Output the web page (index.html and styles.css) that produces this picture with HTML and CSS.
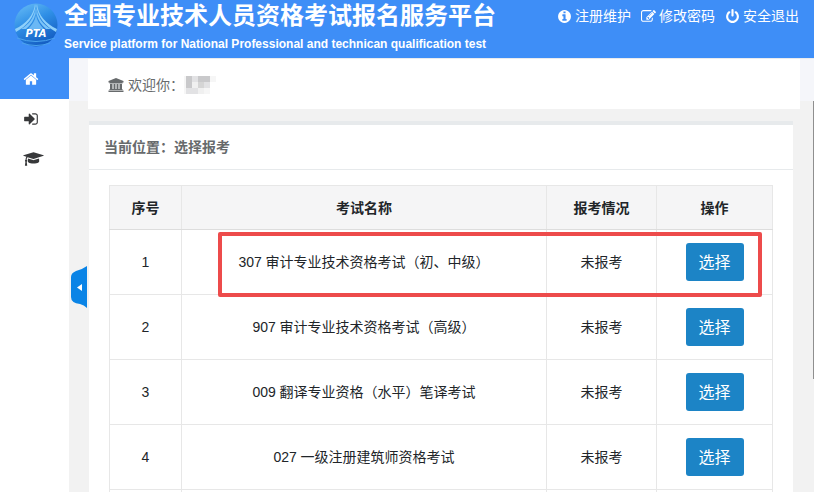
FILE: index.html
```html
<!DOCTYPE html>
<html lang="zh-CN">

<head>
    <meta charset="UTF-8">
    <meta name="viewport" content="width=device-width, initial-scale=1.0">
    <title>全国专业技术人员资格考试报名服务平台</title>
    <link rel="stylesheet" href="styles.css">
</head>

<body>

    <header class="header">
        <svg class="logo" viewBox="0 0 44 44" aria-hidden="true">
            <defs>
                <linearGradient id="logo-bg" x1="0" y1="0" x2="0.5" y2="1">
                    <stop offset="0" stop-color="#6cc0f7" />
                    <stop offset="0.5" stop-color="#2f8fe6" />
                    <stop offset="1" stop-color="#1560c4" />
                </linearGradient>
            </defs>
            <circle cx="22" cy="22" r="21.5" fill="url(#logo-bg)" />
            <path d="M21 1C20 12 12 21 1 26L2 29C13 23 20 14 21.500 3ZM23 1C24 12 32 21 43 26L42 29C31 23 24 14 22.500 3Z" fill="#8fd0fa" />
            <path d="M21.500 5C20 16 14 22 7 26H12C17 22 20 17 21.500 11ZM22.500 5C24 16 30 22 37 26H32C27 22 24 17 22.500 11Z" fill="#7cc4f8" />
            <path d="M22 12C21 18 18 22 14 26H30C26 22 23 18 22 12Z" fill="#6ab8f5" />
            <path d="M3 35Q22 42 41 35" fill="none" stroke="#4ba3ee" stroke-width="1" />
            <path d="M8 40Q22 45 36 40" fill="none" stroke="#4ba3ee" stroke-width="1" />
            <text x="22" y="34" text-anchor="middle" class="logo-text">PTA</text>
        </svg>
        <div class="brand">
            <h1>全国专业技术人员资格考试报名服务平台</h1>
            <p>Service platform for National Professional and technican qualification test</p>
        </div>
        <nav class="user-links">
            <a href="#">
                <svg class="icon" viewBox="0 0 1792 1792"><path d="M1152 1376v-160q0-14-9-23t-23-9h-96v-512q0-14-9-23t-23-9h-320q-14 0-23 9t-9 23v160q0 14 9 23t23 9h96v320h-96q-14 0-23 9t-9 23v160q0 14 9 23t23 9h448q14 0 23-9t9-23zm-128-896v-160q0-14-9-23t-23-9h-192q-14 0-23 9t-9 23v160q0 14 9 23t23 9h192q14 0 23-9t9-23zm640 416q0 209-103 385.5t-279.5 279.5-385.5 103-385.5-103-279.5-279.5-103-385.5 103-385.5 279.5-279.5 385.5-103 385.5 103 279.5 279.5 103 385.5z" /></svg>
                注册维护
            </a>
            <a href="#">
                <svg class="icon" viewBox="0 0 1792 1792"><path d="M888 1184l116-116-152-152-116 116v56h96v96h56zm440-720q-16-16-33 1l-350 350q-17 17-1 33t33-1l350-350q17-17 1-33zm80 594v190q0 119-84.5 203.5t-203.5 84.5h-832q-119 0-203.5-84.5t-84.5-203.5v-832q0-119 84.5-203.5t203.5-84.5h832q63 0 117 25 15 7 18 23 3 17-9 29l-49 49q-14 14-32 8-23-6-45-6h-832q-66 0-113 47t-47 113v832q0 66 47 113t113 47h832q66 0 113-47t47-113v-126q0-13 9-22l64-64q15-15 35-7t20 29zm-96-738l288 288-672 672h-288v-288zm444 132l-92 92-288-288 92-92q28-28 68-28t68 28l152 152q28 28 28 68t-28 68z" /></svg>
                修改密码
            </a>
            <a href="#">
                <svg class="icon" viewBox="0 0 1792 1792"><path d="M1664 896q0 156-61 298t-164 245-245 164-298 61-298-61-245-164-164-245-61-298q0-182 80.5-343t226.5-270q43-32 95.5-25t83.5 50q32 42 24.5 94.5t-49.5 84.5q-98 74-151.5 181t-53.5 228q0 104 40.5 198.5t109.5 163.5 163.5 109.5 198.5 40.5 198.5-40.5 163.5-109.5 109.5-163.5 40.5-198.5q0-121-53.5-228t-151.5-181q-42-32-49.5-84.5t24.5-94.5q31-43 84-50t95 25q146 109 226.5 270t80.5 343zm-640-768v640q0 52-38 90t-90 38-90-38-38-90v-640q0-52 38-90t90-38 90 38 38 90z" /></svg>
                安全退出
            </a>
        </nav>
    </header>

    <div class="layout">
        <nav class="sidebar">
            <a href="#" class="active" aria-label="首页">
                <svg class="icon" viewBox="0 0 1792 1792"><path d="M1472 992v480q0 26-19 45t-45 19h-384v-384h-256v384h-384q-26 0-45-19t-19-45v-480q0-1 .5-3t.5-3l575-474 575 474q1 2 1 6zm223-69l-62 74q-8 9-21 11h-3q-13 0-21-7l-692-577-692 577q-12 8-24 7-13-2-21-11l-62-74q-8-10-7-23.5t11-21.5l719-599q32-26 76-26t76 26l244 204v-195q0-14 9-23t23-9h192q14 0 23 9t9 23v408l219 182q10 8 11 21.5t-7 23.5z" /></svg>
            </a>
            <a href="#" aria-label="报考">
                <svg class="icon" viewBox="0 0 1792 1792"><path d="M1312 896q0 26-19 45l-544 544q-19 19-45 19t-45-19-19-45v-288h-448q-26 0-45-19t-19-45v-384q0-26 19-45t45-19h448v-288q0-26 19-45t45-19 45 19l544 544q19 19 19 45zm352-352v704q0 119-84.5 203.5t-203.5 84.5h-320q-13 0-22.5-9.5t-9.5-22.5q0-4-1-20t-.5-26.5 3-23.5 10-19.5 20.5-6.5h320q66 0 113-47t47-113v-704q0-66-47-113t-113-47h-312l-11.5-1-11.5-3-8-5.5-7-9-2-13.5q0-4-1-20t-.5-26.5 3-23.5 10-19.5 20.5-6.5h320q119 0 203.5 84.5t84.5 203.5z" /></svg>
            </a>
            <a href="#" aria-label="证书">
                <svg class="icon icon-wide" viewBox="0 0 2304 1792"><path d="M1774 836l18 316q4 69-82 128t-235 93.5-323 34.5-323-34.5-235-93.5-82-128l18-316 574 181q22 7 48 7t48-7zm530-324q0 23-22 31l-1120 352q-4 1-10 1t-10-1l-652-206q-43 34-71 111.5t-34 178.5q63 36 63 109 0 69-58 107l58 433q2 14-8 25-9 11-24 11h-192q-15 0-24-11-10-11-8-25l58-433q-58-38-58-107 0-73 65-111 11-207 98-330l-333-104q-22-8-22-31t22-31l1120-352q4-1 10-1t10 1l1120 352q22 8 22 31z" /></svg>
            </a>
        </nav>

        <main class="main">
            <div class="welcome">
                <svg class="icon" viewBox="0 0 16 16"><path d="M8 1L15.500 4V5.500H14.500V6.500H1.500V5.500H.500V4ZM2 7H4.500V12H5.500V7H7.500V12H8.500V7H10.500V12H11.500V7H14V12H14.500V13H1.500V12H2ZM.500 13.500H15.500V15H.500Z" /></svg>
                <span>欢迎你：</span>
                <!-- user name is masked -->
                <svg class="masked-name" viewBox="4 0 32 18" shape-rendering="crispEdges">
                    <path fill="#f6f6f6" d="M0 12h6v6H0zM30 0h6v6h-6zM24 12h6v6h-6zM3 0h3v12H3z" />
                    <path fill="#c9c9cb" d="M6 0h6v12H6zM18 0h12v6H18z" />
                    <path fill="#e2e2e4" d="M12 0h6v6h-6zM6 12h12v6H6zM24 6h6v6h-6z" />
                    <path fill="#d5d5d5" d="M18 6h6v6h-6z" />
                    <path fill="#f0f0f0" d="M12 6h6v6h-6zM18 12h6v6h-6z" />
                </svg>
            </div>

            <section class="card">
                <h2 class="card-title">当前位置：选择报考</h2>
                <div class="card-body">
                    <div class="table-wrap">
                        <table class="exam-table">
                            <thead>
                                <tr>
                                    <th class="col-no">序号</th>
                                    <th>考试名称</th>
                                    <th class="col-status">报考情况</th>
                                    <th class="col-action">操作</th>
                                </tr>
                            </thead>
                            <tbody>
                                <tr>
                                    <td>1</td>
                                    <td>307 审计专业技术资格考试（初、中级）</td>
                                    <td>未报考</td>
                                    <td><button type="button" class="btn">选择</button></td>
                                </tr>
                                <tr>
                                    <td>2</td>
                                    <td>907 审计专业技术资格考试（高级）</td>
                                    <td>未报考</td>
                                    <td><button type="button" class="btn">选择</button></td>
                                </tr>
                                <tr>
                                    <td>3</td>
                                    <td>009 翻译专业资格（水平）笔译考试</td>
                                    <td>未报考</td>
                                    <td><button type="button" class="btn">选择</button></td>
                                </tr>
                                <tr>
                                    <td>4</td>
                                    <td>027 一级注册建筑师资格考试</td>
                                    <td>未报考</td>
                                    <td><button type="button" class="btn">选择</button></td>
                                </tr>
                                <tr>
                                    <td></td>
                                    <td></td>
                                    <td></td>
                                    <td></td>
                                </tr>
                            </tbody>
                        </table>
                        <div class="highlight"></div>
                    </div>
                </div>
            </section>

            <button type="button" class="collapse" aria-label="收起菜单">
                <svg viewBox="0 0 16 42"><path class="collapse-bg" d="M16 0V42Q13 39 9 38Q0 37 0 31V11Q0 7 5 5Q12 3 16 0Z" /><path class="collapse-arrow" d="M6 21.500L11 18V25Z" /></svg>
            </button>
            <div class="scroll-thumb"></div>
        </main>
    </div>

</body>

</html>
```

FILE: styles.css
```css
* {
    box-sizing: border-box;
}

body {
    margin: 0;
    height: 100vh;
    display: flex;
    flex-direction: column;
    overflow: hidden;
    font-family: "Liberation Sans", "Noto Sans CJK SC", sans-serif;
    font-size: 14px;
    line-height: 20px;
    color: #212529;
}

a {
    color: inherit;
    text-decoration: none;
}

.icon {
    width: 16px;
    height: 16px;
    fill: currentColor;
    flex: none;
}

/* Header */
.header {
    display: flex;
    align-items: flex-start;
    height: 58px;
    flex: none;
    padding: 0 15px 0 14px;
    background-color: #3e8ef7;
    color: #fff;
}

.logo {
    width: 44px;
    height: 44px;
    margin-top: 3px;
}

.logo-text {
    font-size: 10px;
    font-weight: bold;
    font-style: italic;
    font-family: "DejaVu Sans", sans-serif;
    fill: #fff;
}

.brand {
    margin-left: 6px;
}

.brand h1 {
    margin: 0;
    font-size: 24px;
    line-height: 32px;
    white-space: nowrap;
}

.brand p {
    margin: 0;
    font-size: 12px;
    font-weight: bold;
    line-height: 24px;
    white-space: nowrap;
}

.user-links {
    display: flex;
    gap: 10px;
    margin-left: auto;
    padding-top: 6px;
}

.user-links a {
    display: flex;
    align-items: center;
    gap: 3px;
    white-space: nowrap;
}

.user-links .icon {
    width: 15px;
    height: 15px;
}

/* Sidebar */
.layout {
    display: flex;
    flex: 1;
    min-height: 0;
}

.sidebar {
    width: 69px;
    flex: none;
    background-color: #fff;
    color: #37383a;
}

.sidebar a {
    display: flex;
    align-items: center;
    height: 40px;
    padding-left: 23px;
}

.sidebar .active {
    height: 41px;
    background-color: #3e8ef7;
    color: #fff;
}

.sidebar .icon-wide {
    width: 21px;
}

/* Main */
.main {
    position: relative;
    flex: 1;
    min-width: 0;
    padding: 0 14px 0 19px;
    border-top: 1px solid #e9ebee;
    background: linear-gradient(#f5f6fa 42px, #f2f2f2 42px);
    overflow: hidden;
}

.welcome {
    display: flex;
    align-items: center;
    height: 50px;
    padding: 2px 20px 0;
    background-color: #fff;
    color: #676a6c;
}

.welcome .icon {
    margin-right: 4px;
}

.masked-name {
    width: 32px;
    height: 18px;
}

.card {
    margin: 12px 7px 0 1px;
    border-top: 4px solid #e7eaec;
    background-color: #fff;
}

.card-title {
    margin: 0;
    padding: 12px 15px;
    border-bottom: 1px solid #e7eaec;
    font-size: 14px;
    color: #676a6c;
}

.card-body {
    padding: 15px 20px 20px;
}

.table-wrap {
    position: relative;
}

.exam-table {
    width: 100%;
    table-layout: fixed;
    border-collapse: collapse;
    text-align: center;
}

.exam-table th,
.exam-table td {
    padding: 0;
    border: 1px solid #e7e7e7;
}

.exam-table th {
    height: 44px;
    background-color: #f5f5f6;
    border-bottom-color: #ddd;
}

.exam-table td {
    height: 65px;
}

.col-no {
    width: 72px;
}

.col-status {
    width: 110px;
}

.col-action {
    width: 116px;
}

.btn {
    width: 58px;
    height: 38px;
    padding: 0 0 2px;
    border: none;
    border-radius: 3px;
    background-color: #1c84c6;
    color: #fff;
    font-family: inherit;
    font-size: 16px;
    cursor: pointer;
}

.btn:hover {
    background-color: #1a7bb9;
}

.highlight {
    position: absolute;
    top: 47px;
    left: 109px;
    right: 11px;
    height: 65px;
    border: 4px solid #ed4b4b;
    border-radius: 2px;
    pointer-events: none;
}

.collapse {
    position: absolute;
    top: 207px;
    left: 2px;
    width: 16px;
    height: 42px;
    padding: 0;
    border: none;
    background: none;
    cursor: pointer;
}

.collapse svg {
    display: block;
}

.collapse-bg {
    fill: #0a84e6;
}

.collapse-arrow {
    fill: #fff;
}

.scroll-thumb {
    position: absolute;
    top: 42px;
    right: 0;
    width: 1px;
    height: 278px;
    background-color: #8f8f8f;
}
```
